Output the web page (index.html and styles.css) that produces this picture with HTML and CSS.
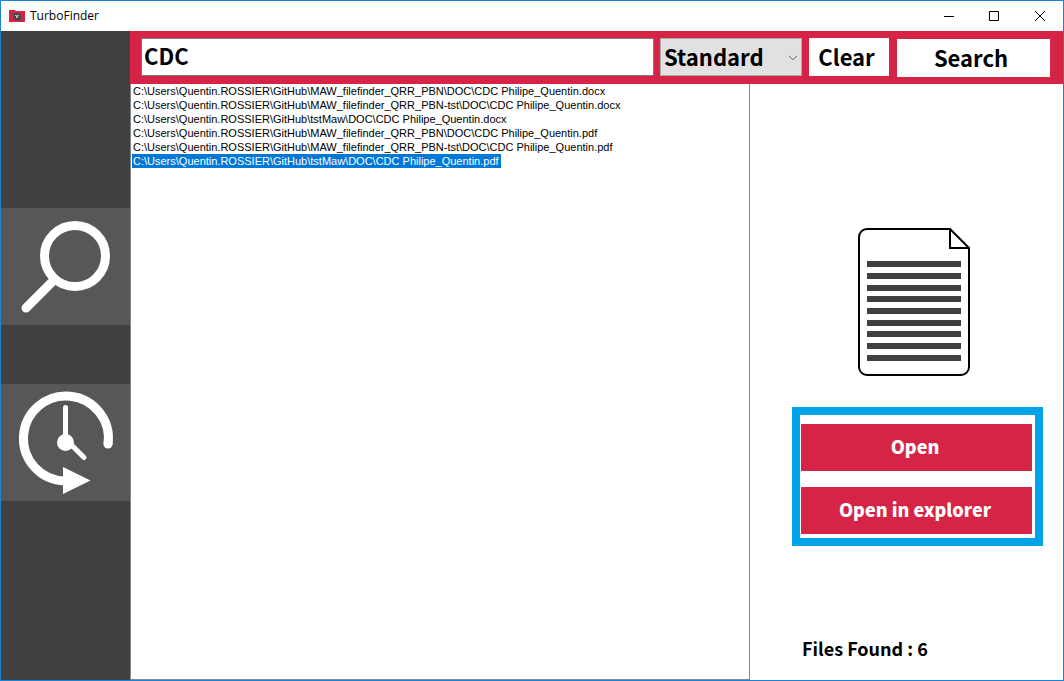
FILE: index.html
```html
<!DOCTYPE html>
<html lang="en">
<head>
<meta charset="utf-8">
<title>TurboFinder</title>
<link rel="stylesheet" href="styles.css">
</head>
<body>
<div class="window">
  <header class="titlebar">
    <svg class="app-icon" viewBox="0 0 16 12" aria-hidden="true">
      <path d="M0 0h6l1 1h9v11H0z" fill="#d52446"/>
      <path d="M2 3h8l3 3v3l2 2h-4L8 10 4 6z" fill="#6b4a50"/>
      <circle cx="8" cy="6.500" r="3.500" fill="#454545"/>
      <path d="M6 5.500h1.500v2.500M8.500 8V5.500H10" fill="none" stroke="#bbb"/>
    </svg>
    <h1 class="title">TurboFinder</h1>
    <div class="window-controls">
      <button class="window-button" type="button" aria-label="Minimize"><svg viewBox="0 0 10 10"><path d="M1 5.500h10"/></svg></button>
      <button class="window-button" type="button" aria-label="Maximize"><svg viewBox="0 0 10 10"><path d="M.5.5h9v9h-9z"/></svg></button>
      <button class="window-button" type="button" aria-label="Close"><svg viewBox="0 0 10 10"><path d="M0 0l10 10M10 0L0 10"/></svg></button>
    </div>
  </header>
  <div class="body">
    <nav class="sidebar">
      <button class="nav-button" type="button" aria-label="Search">
        <svg viewBox="0 0 129 117">
          <circle cx="74" cy="48" r="30.500" fill="none" stroke="#fff" stroke-width="9"/>
          <path d="M25 100l28-28" stroke="#fff" stroke-width="9" stroke-linecap="round"/>
        </svg>
      </button>
      <button class="nav-button" type="button" aria-label="History">
        <svg viewBox="0 0 129 117">
          <path d="M107 60.500A42.500 42.500 0 1 0 64 97" fill="none" stroke="#fff" stroke-width="9"/>
          <path d="M107 60v0.100" stroke="#fff" stroke-width="9" stroke-linecap="round"/>
          <path d="M62 83l27.500 13.500L62 110z" fill="#fff"/>
          <circle cx="64.500" cy="58.500" r="8.500" fill="#fff"/>
          <path d="M64.500 58V23.500M64.500 55l18.500 18.500" fill="none" stroke="#fff" stroke-width="5" stroke-linecap="round"/>
        </svg>
      </button>
    </nav>
    <main class="content">
      <form class="toolbar">
        <input class="query" type="text" value="CDC" aria-label="File name">
        <div class="mode">
          <select class="mode-select" aria-label="Search mode"><option>Standard</option></select>
          <svg class="chevron" viewBox="0 0 10 6" aria-hidden="true"><path d="M1 .8l4 4 4-4"/></svg>
        </div>
        <button class="tool-button clear" type="button">Clear</button>
        <button class="tool-button search" type="button">Search</button>
      </form>
      <div class="panes">
        <ul class="results" role="listbox" aria-label="Results">
          <li class="result" role="option">C:\Users\Quentin.ROSSIER\GitHub\MAW_filefinder_QRR_PBN\DOC\CDC Philipe_Quentin.docx</li>
          <li class="result" role="option">C:\Users\Quentin.ROSSIER\GitHub\MAW_filefinder_QRR_PBN-tst\DOC\CDC Philipe_Quentin.docx</li>
          <li class="result" role="option">C:\Users\Quentin.ROSSIER\GitHub\tstMaw\DOC\CDC Philipe_Quentin.docx</li>
          <li class="result" role="option">C:\Users\Quentin.ROSSIER\GitHub\MAW_filefinder_QRR_PBN\DOC\CDC Philipe_Quentin.pdf</li>
          <li class="result" role="option">C:\Users\Quentin.ROSSIER\GitHub\MAW_filefinder_QRR_PBN-tst\DOC\CDC Philipe_Quentin.pdf</li>
          <li class="result selected" role="option" aria-selected="true">C:\Users\Quentin.ROSSIER\GitHub\tstMaw\DOC\CDC Philipe_Quentin.pdf</li>
        </ul>
        <aside class="details">
          <svg class="document" viewBox="0 0 112 148" aria-hidden="true">
            <path d="M92 1H9a8 8 0 0 0-8 8v130a8 8 0 0 0 8 8h94a8 8 0 0 0 8-8V20L92 1v19h19" fill="#fff" stroke="#000" stroke-width="2"/>
            <path d="M9 36h94M9 48h94M9 60h94M9 71h94M9 83h94M9 95h94M9 106h94M9 118h94M9 130h94" stroke="#404040" stroke-width="6"/>
          </svg>
          <div class="actions">
            <button class="action" type="button">Open</button>
            <button class="action" type="button">Open in explorer</button>
          </div>
          <p class="count">Files Found : 6</p>
        </aside>
      </div>
    </main>
  </div>
</div>
</body>
</html>
```
FILE: styles.css
```css
* { box-sizing: border-box; }
body {
  margin: 0;
  background: #fff;
  color: #000;
  font-family: "Noto Sans CJK SC", "Open Sans", sans-serif;
}
button, input, select { font: inherit; color: inherit; margin: 0; border-radius: 0; }
button { border: 0; padding: 0; }
.window {
  display: flex;
  flex-direction: column;
  min-height: 100vh;
  border: 1px solid #1883d7;
}
.titlebar { display: flex; align-items: center; height: 30px; padding-left: 8px; }
.app-icon { width: 16px; height: 12px; margin-right: 5px; }
.title { margin: 0; font: 12px/16px "Open Sans", sans-serif; }
.window-controls { display: flex; margin-left: auto; }
.window-button {
  display: flex;
  align-items: center;
  justify-content: center;
  width: 46px;
  height: 28px;
  background: none;
}
.window-button svg { width: 10px; height: 10px; fill: none; stroke: #000; overflow: visible; }
.body { display: flex; flex: 1; }
.sidebar {
  display: flex;
  flex-direction: column;
  gap: 59px;
  width: 129px;
  padding-top: 177px;
  background: #404040;
}
.nav-button { background: #575757; }
.nav-button svg { display: block; width: 100%; }
.content { display: flex; flex: 1; flex-direction: column; min-width: 0; }
.toolbar {
  display: flex;
  align-items: flex-start;
  height: 53px;
  padding: 7px 13px 0 11px;
  background: #d52446;
  font-size: 22px;
  font-weight: 700;
  line-height: 32px;
}
.query {
  flex: 1;
  min-width: 0;
  height: 38px;
  padding: 0 2px 4px;
  border: 1px solid #7a7a7a;
  background: #fff;
}
.mode { position: relative; width: 142px; margin-left: 6px; }
.mode-select {
  display: block;
  appearance: none;
  width: 100%;
  height: 38px;
  padding: 0 3px 2px;
  border: 1px solid #adadad;
  background: #e1e1e1;
}
.chevron {
  position: absolute;
  right: 4px;
  top: 17px;
  width: 10px;
  height: 6px;
  fill: none;
  stroke: #606060;
  pointer-events: none;
}
.tool-button { height: 38px; padding: 0 5px 2px 0; background: #fff; }
.clear { width: 80px; margin: 0 8px 0 7px; }
.search { width: 153px; margin-top: 1px; }
.panes { display: flex; flex: 1; }
.results {
  flex: 1;
  margin: 0;
  padding: 0 1px;
  border: 1px solid #828790;
  border-top: 0;
  list-style: none;
  font: 11px/14px "Liberation Sans", sans-serif;
}
.result { width: max-content; padding: 0 2px 0 1px; }
.selected { background: #0078d7; color: #fff; }
.details {
  display: flex;
  flex-direction: column;
  width: 313px;
  padding: 144px 20px 18px 42px;
  font-size: 18px;
  font-weight: 700;
  line-height: 28px;
}
.document { width: 112px; height: 148px; margin-left: 66px; }
.actions {
  display: grid;
  gap: 16px;
  margin-top: 31px;
  padding: 9px 3px 4px 1px;
  border: 8px solid #00a2e8;
  font-weight: 900;
}
.action { height: 47px; padding: 0 3px 4px 0; background: #d52446; color: #fff; }
.count { margin: auto 0 0 10px; }
```
